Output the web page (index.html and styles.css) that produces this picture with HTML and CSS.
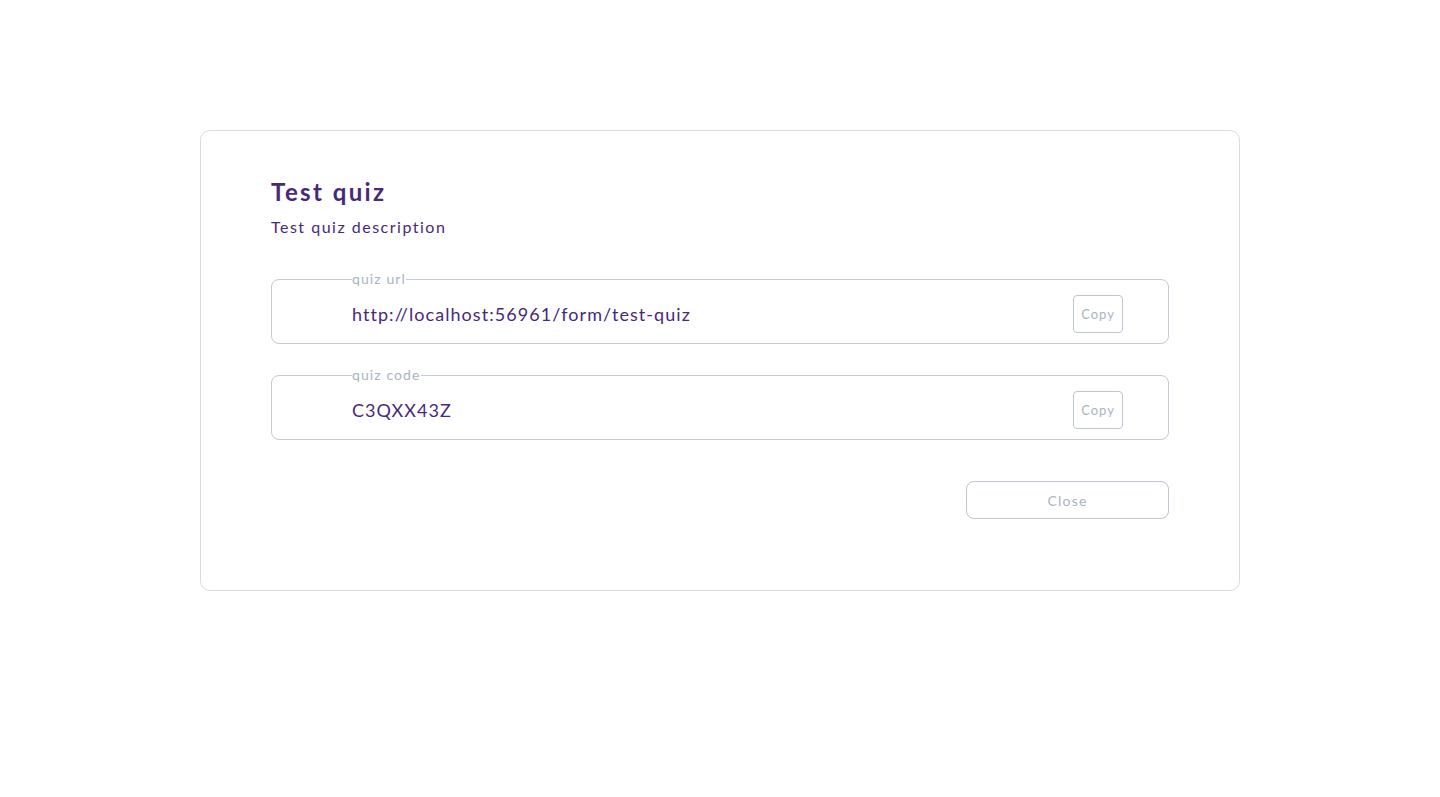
FILE: index.html
```html
<!DOCTYPE html>
<html lang="en">
<head>
<meta charset="utf-8">
<title>Test quiz</title>
<link rel="stylesheet" href="styles.css">
</head>
<body>
<main class="page">
  <section class="card">
    <h1 class="title">Test quiz</h1>
    <p class="desc">Test quiz description</p>
    <fieldset class="field">
      <legend class="field-label">quiz url</legend>
      <div class="field-row">
        <span class="field-value">http://localhost:56961/form/test-quiz</span>
        <button class="copy-btn" type="button">Copy</button>
      </div>
    </fieldset>
    <fieldset class="field">
      <legend class="field-label">quiz code</legend>
      <div class="field-row">
        <span class="field-value">C3QXX43Z</span>
        <button class="copy-btn" type="button">Copy</button>
      </div>
    </fieldset>
    <div class="actions">
      <button class="close-btn" type="button">Close</button>
    </div>
  </section>
</main>
</body>
</html>
```
FILE: styles.css
```css
* { box-sizing: border-box; }
html, body { margin: 0; padding: 0; background: #ffffff; }
body {
  font-family: "Lato", "Open Sans", sans-serif;
  color: #47297a;
}
.page {
  display: flex;
  justify-content: center;
  padding-top: 130px;
}
.card {
  width: 1040px;
  height: 461px;
  border: 1px solid #d6dce3;
  border-radius: 10px;
  padding: 46px 70px 0 70px;
  display: flex;
  flex-direction: column;
}
.title {
  margin: 0;
  font-size: 24px;
  line-height: 30px;
  font-weight: 700;
  letter-spacing: 2.4px;
  color: #47297a;
}
.desc {
  margin: 10px 0 0 0;
  font-size: 16px;
  line-height: 20px;
  letter-spacing: 1.5px;
  color: #47297a;
}
.field {
  margin: 34px 0 0 0;
  padding: 0 45px 10px 80px;
  border: 1px solid #c3cbd7;
  border-radius: 8px;
  min-width: 0;
}
.field + .field { margin-top: 23px; }
.field-label {
  padding: 0;
  font-size: 14px;
  line-height: 16px;
  letter-spacing: 1.1px;
  color: #a9b4c3;
}
.field-row {
  display: flex;
  align-items: center;
  justify-content: space-between;
  margin-top: 8px;
  height: 38px;
}
.field-value {
  font-size: 18px;
  letter-spacing: 1.05px;
  color: #47297a;
}
.copy-btn {
  width: 50px;
  height: 38px;
  padding: 0;
  background: #fff;
  border: 1px solid #bcc5d2;
  border-radius: 4px;
  font-family: inherit;
  font-size: 13px;
  letter-spacing: 1px;
  color: #a9b4c3;
}
.actions {
  display: flex;
  justify-content: flex-end;
  margin-top: 41px;
}
.close-btn {
  width: 203px;
  height: 38px;
  background: #fff;
  border: 1px solid #bcc5d2;
  border-radius: 8px;
  font-family: inherit;
  font-size: 14px;
  letter-spacing: 1.2px;
  color: #a9b4c3;
}
```
